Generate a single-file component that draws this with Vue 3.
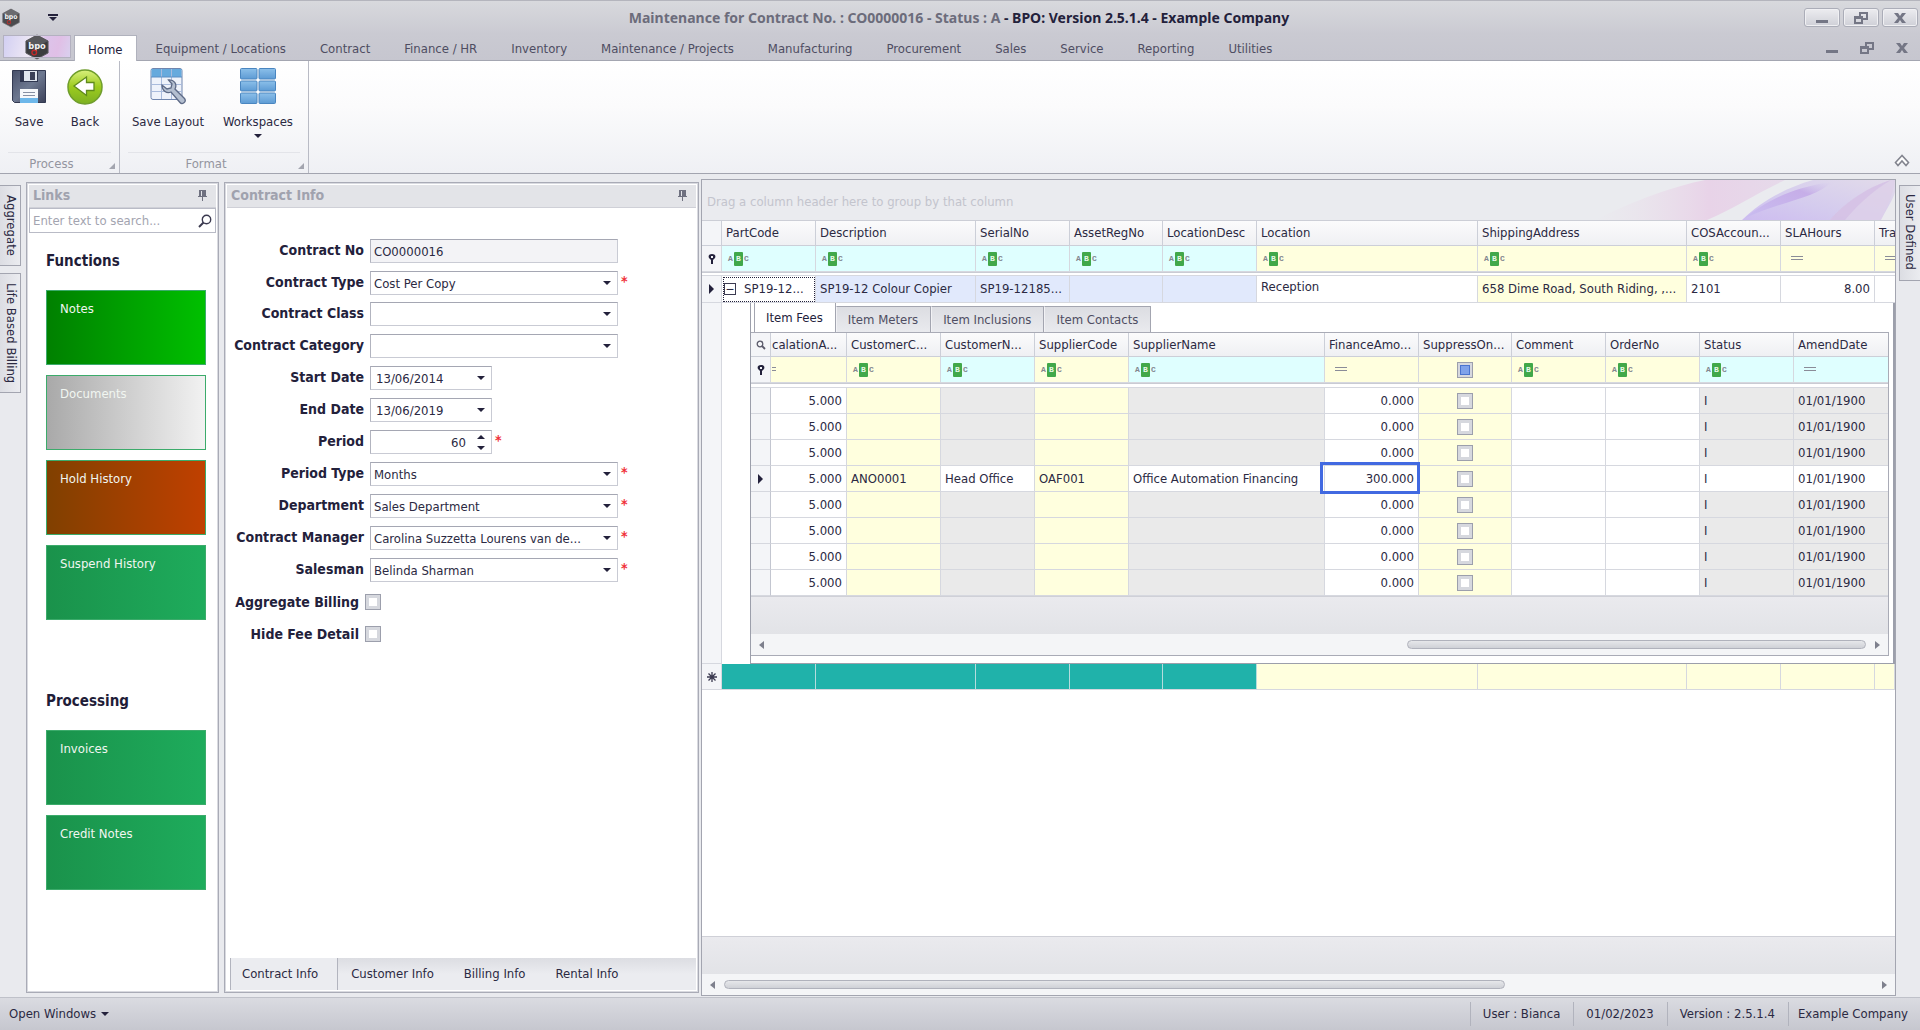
<script setup>
import { ref } from 'vue'

const menu = ['Home', 'Equipment / Locations', 'Contract', 'Finance / HR', 'Inventory', 'Maintenance / Projects', 'Manufacturing', 'Procurement', 'Sales', 'Service', 'Reporting', 'Utilities']
const activeMenu = ref('Home')

const tileGroups = [
  {
    title: 'Functions',
    tiles: [
      { label: 'Notes', tone: 'bright' },
      { label: 'Documents', tone: 'silver' },
      { label: 'Hold History', tone: 'rust' },
      { label: 'Suspend History', tone: 'green' },
    ],
  },
  {
    title: 'Processing',
    tiles: [
      { label: 'Invoices', tone: 'green' },
      { label: 'Credit Notes', tone: 'green' },
    ],
  },
]

const fields = [
  { id: 'no', label: 'Contract No', kind: 'readonly', value: 'CO0000016' },
  { id: 'type', label: 'Contract Type', kind: 'select', value: 'Cost Per Copy', required: true, tight: true },
  { id: 'class', label: 'Contract Class', kind: 'select', value: '' },
  { id: 'category', label: 'Contract Category', kind: 'select', value: '' },
  { id: 'start', label: 'Start Date', kind: 'date', value: '13/06/2014' },
  { id: 'end', label: 'End Date', kind: 'date', value: '13/06/2019' },
  { id: 'period', label: 'Period', kind: 'spin', value: '60', required: true },
  { id: 'ptype', label: 'Period Type', kind: 'select', value: 'Months', required: true },
  { id: 'dept', label: 'Department', kind: 'select', value: 'Sales Department', required: true },
  { id: 'manager', label: 'Contract Manager', kind: 'select', value: 'Carolina Suzzetta Lourens van de...', required: true },
  { id: 'sales', label: 'Salesman', kind: 'select', value: 'Belinda Sharman', required: true },
]
const checks = [
  { id: 'agg', label: 'Aggregate Billing' },
  { id: 'hide', label: 'Hide Fee Detail' },
]
const panelTabs = ['Contract Info', 'Customer Info', 'Billing Info', 'Rental Info']

const itemColumns = [
  { name: 'PartCode', width: 94, tone: 'cyan', filter: 'abc' },
  { name: 'Description', width: 160, tone: 'cyan', filter: 'abc' },
  { name: 'SerialNo', width: 94, tone: 'cyan', filter: 'abc' },
  { name: 'AssetRegNo', width: 93, tone: 'cyan', filter: 'abc' },
  { name: 'LocationDesc', width: 94, tone: 'cyan', filter: 'abc' },
  { name: 'Location', width: 221, tone: 'cream', filter: 'abc' },
  { name: 'ShippingAddress', width: 209, tone: 'cream', filter: 'abc' },
  { name: 'COSAccoun...', width: 94, tone: 'cream', filter: 'abc' },
  { name: 'SLAHours', width: 94, tone: 'cream', filter: 'eq' },
  { name: 'Tra', width: 0, tone: 'cream', filter: 'eq', edge: true },
]

const feeTabs = ['Item Fees', 'Item Meters', 'Item Inclusions', 'Item Contacts']
const feeColumns = [
  { key: 'esc', name: 'calationA...', width: 76, tone: 'cream', filter: 'eq', cell: 'white num', cut: true },
  { key: 'cust', name: 'CustomerC...', width: 94, tone: 'cream', filter: 'abc', cell: 'cream' },
  { key: 'custName', name: 'CustomerN...', width: 94, tone: 'cyan', filter: 'abc', cell: 'grey' },
  { key: 'supp', name: 'SupplierCode', width: 94, tone: 'cream', filter: 'abc', cell: 'cream' },
  { key: 'suppName', name: 'SupplierName', width: 196, tone: 'cyan', filter: 'abc', cell: 'grey' },
  { key: 'finance', name: 'FinanceAmo...', width: 94, tone: 'cream', filter: 'eq', cell: 'white num' },
  { key: 'suppress', name: 'SuppressOn...', width: 93, tone: 'cream', filter: 'check', cell: 'cream mid' },
  { key: 'comment', name: 'Comment', width: 94, tone: 'cream', filter: 'abc', cell: 'white' },
  { key: 'order', name: 'OrderNo', width: 94, tone: 'cream', filter: 'abc', cell: 'white' },
  { key: 'status', name: 'Status', width: 94, tone: 'cyan', filter: 'abc', cell: 'grey' },
  { key: 'amend', name: 'AmendDate', width: 0, tone: 'cyan', filter: 'eq', cell: 'grey' },
]
const feeRows = Array.from({ length: 8 }, (_, i) => ({
  esc: '5.000',
  finance: '0.000',
  status: 'I',
  amend: '01/01/1900',
  ...(i === 3
    ? { current: true, cust: 'ANO0001', custName: 'Head Office', supp: 'OAF001', suppName: 'Office Automation Financing', finance: '300.000' }
    : {}),
}))

const statusItems = ['User : Bianca', '01/02/2023', 'Version : 2.5.1.4', 'Example Company']
</script>

<template>
  <div class="app">
    <header class="titlebar">
      <svg class="logo-small" viewBox="0 0 26 28" aria-hidden="true">
        <path d="M13 1 25 7.500V20.500L13 27 1 20.500V7.500Z" fill="#4a4a4d" stroke="#77777b" />
        <path d="M13 1 25 7.500 13 14 1 7.500Z" fill="#6b6b6f" />
        <text x="13" y="16" text-anchor="middle" class="logo-text">bpo</text>
        <circle cx="10" cy="20" r="2.500" fill="none" stroke="#b3302f" stroke-width="1.500" />
      </svg>
      <button class="quick" aria-label="Customize quick access">
        <svg viewBox="0 0 10 8" width="10" height="8"><path d="M0 0H10V2H0ZM1 3H9L5 7Z" fill="#23213b" /></svg>
      </button>
      <h1><span>Maintenance for Contract No. : CO0000016 - Status : A</span> - BPO: Version 2.5.1.4 - Example Company</h1>
      <div class="win">
        <button aria-label="Minimize"><svg viewBox="0 0 14 12"><path d="M1 8H13V11H1Z" /></svg></button>
        <button aria-label="Restore"><svg viewBox="0 0 14 12"><path fill-rule="evenodd" d="M5 0H14V8H9V12H0V4H5ZM7 2V4H9V6H12V2ZM2 7V10H7V7Z" /></svg></button>
        <button aria-label="Close"><svg viewBox="0 0 14 12"><path d="M1 1H5L7 4 9 1H13L9 6 13 11H9L7 8 5 11H1L5 6Z" /></svg></button>
      </div>
    </header>

    <nav class="menubar">
      <button class="app-button" aria-label="Application menu">
        <svg class="logo" viewBox="0 0 26 28" aria-hidden="true">
          <path d="M13 1 25 7.500V20.500L13 27 1 20.500V7.500Z" fill="#3c3c3f" stroke="#5d5d61" />
          <path d="M13 1 25 7.500 13 14 1 7.500Z" fill="#58585c" />
          <text x="13" y="16" text-anchor="middle" class="logo-text">bpo</text>
          <circle cx="10" cy="20" r="2.500" fill="none" stroke="#c22a2a" stroke-width="1.500" />
        </svg>
      </button>
      <button v-for="m in menu" :key="m" class="menu-tab" :class="{ on: m === activeMenu }">{{ m }}</button>
      <div class="mdi">
        <button aria-label="Minimize document"><svg viewBox="0 0 14 12"><path d="M1 8H13V11H1Z" /></svg></button>
        <button aria-label="Restore document"><svg viewBox="0 0 14 12"><path fill-rule="evenodd" d="M5 0H14V8H9V12H0V4H5ZM7 2V4H9V6H12V2ZM2 7V10H7V7Z" /></svg></button>
        <button aria-label="Close document"><svg viewBox="0 0 14 12"><path d="M1 1H5L7 4 9 1H13L9 6 13 11H9L7 8 5 11H1L5 6Z" /></svg></button>
      </div>
    </nav>

    <section class="ribbon">
      <div class="group process">
        <div class="tools">
          <button class="tool">
            <svg viewBox="0 0 36 38" aria-hidden="true">
              <defs><linearGradient id="disk" x2="1" y2="1"><stop stop-color="#48506a" /><stop offset=".5" stop-color="#6d7890" /><stop offset="1" stop-color="#3c4159" /></linearGradient></defs>
              <path d="M1.500 3.500H34.500V35.500H3.500L1.500 33.500Z" fill="url(#disk)" stroke="#333a52" />
              <path d="M9 4H27V15H9Z" fill="#2f3650" /><path d="M13 4H26V14H13Z" fill="#dfe5ee" /><path d="M19 5H24V13H19Z" fill="#3a4058" />
              <path d="M9 22H27V36H9Z" fill="#f6f8fb" /><path d="M9 31H27V36H9Z" fill="#6db7ea" /><path d="M12 25.500H24M12 28.500H24" stroke="#8790a4" />
            </svg>
            <span>Save</span>
          </button>
          <button class="tool">
            <svg viewBox="0 0 36 38" aria-hidden="true">
              <defs><linearGradient id="orb" x2="0" y2="1"><stop stop-color="#d8f07c" /><stop offset=".5" stop-color="#9ccb1e" /><stop offset="1" stop-color="#7cb022" /></linearGradient></defs>
              <circle cx="18" cy="20" r="17" fill="url(#orb)" stroke="#6f9d2c" stroke-width="1.500" />
              <path d="M7 19 19.500 10V15.500H27V23.500H19.500V28.500Z" fill="#fff" stroke="#5f8a1c" stroke-width="1.300" />
            </svg>
            <span>Back</span>
          </button>
        </div>
        <div class="caption">Process</div>
      </div>
      <div class="group format">
        <div class="tools">
          <button class="tool">
            <svg viewBox="0 0 36 38" aria-hidden="true">
              <rect x="1" y="1.500" width="31" height="31" rx="2" fill="#eef2fa" stroke="#7086ae" />
              <path d="M1.500 2H31.500V10H1.500Z" fill="#66aadd" /><path d="M11.500 2V32M21.500 2V32M1 17.500H32M1 24.500H32" stroke="#a9bbdc" />
              <path d="M1 10H32" stroke="#5c8fc4" />
              <path d="M12 18C12 24 17 27 21 25L30 35.500C32 38 37 35 34.500 31.500L25 22C27.500 17 24 12.500 18.500 13L22 17 21 21 17 22Z" fill="#b4bfd0" stroke="#5d6a86" stroke-width="1.300" />
            </svg>
            <span>Save Layout</span>
          </button>
          <button class="tool">
            <svg viewBox="0 0 36 38" aria-hidden="true">
              <defs><linearGradient id="win" x2="0" y2="1"><stop stop-color="#8cc0ea" /><stop offset="1" stop-color="#5d9bd4" /></linearGradient></defs>
              <g fill="url(#win)" stroke="#4a86c0">
                <rect x=".5" y="1.500" width="16.500" height="10.500" rx="1" /><rect x="19" y="1.500" width="16.500" height="10.500" rx="1" />
                <rect x=".5" y="14" width="16.500" height="10" rx="1" /><rect x="19" y="14" width="16.500" height="10" rx="1" />
                <rect x=".5" y="26" width="16.500" height="10.500" rx="1" /><rect x="19" y="26" width="16.500" height="10.500" rx="1" />
              </g>
            </svg>
            <span>Workspaces</span>
            <i class="tri"></i>
          </button>
        </div>
        <div class="caption">Format</div>
      </div>
      <button class="collapse" aria-label="Collapse ribbon">
        <svg viewBox="0 0 16 13" width="16" height="13"><path d="M8 1.500 1.500 8.500 4 11.500 8 7 12 11.500 14.500 8.500Z" fill="#fff" stroke="#83858f" stroke-width="1.600" /></svg>
      </button>
    </section>

    <main class="work">
      <aside class="strip left">
        <button>Aggregate</button>
        <button>Life Based Billing</button>
      </aside>

      <section class="panel links">
        <header class="panel-head">
          <h2>Links</h2>
          <svg viewBox="0 0 9 11" width="9" height="11"><path d="M1 0H8V6H9V7H5V11H4V7H0V6H1ZM3 1V6H4V1Z" fill="#6f7180" fill-rule="evenodd" /></svg>
        </header>
        <div class="search">
          <input type="search" aria-label="Search links" placeholder="Enter text to search..." />
          <svg viewBox="0 0 14 14" width="14" height="14"><circle cx="8.500" cy="5.500" r="4.200" fill="none" stroke="#3b3a50" stroke-width="1.400" /><path d="M5.500 8.500 1 13" stroke="#3b3a50" stroke-width="2" /></svg>
        </div>
        <div v-for="g in tileGroups" :key="g.title" class="tile-group">
          <h3>{{ g.title }}</h3>
          <button v-for="t in g.tiles" :key="t.label" class="tile" :class="t.tone">{{ t.label }}</button>
        </div>
      </section>

      <section class="panel contract">
        <header class="panel-head">
          <h2>Contract Info</h2>
          <svg viewBox="0 0 9 11" width="9" height="11"><path d="M1 0H8V6H9V7H5V11H4V7H0V6H1ZM3 1V6H4V1Z" fill="#6f7180" fill-rule="evenodd" /></svg>
        </header>
        <form class="form" @submit.prevent>
          <div v-for="f in fields" :key="f.id" class="field" :class="{ tight: f.tight }">
            <label :for="f.id">{{ f.label }}</label>
            <span class="box" :class="f.kind">
              <select v-if="f.kind === 'select'" :id="f.id"><option>{{ f.value }}</option></select>
              <input v-else :id="f.id" type="text" :value="f.value" :readonly="f.kind === 'readonly'" />
            </span>
            <span v-if="f.required" class="req">*</span>
          </div>
          <div v-for="c in checks" :key="c.id" class="field check">
            <label :for="c.id">{{ c.label }}</label>
            <input :id="c.id" type="checkbox" class="cb" />
          </div>
        </form>
        <div class="panel-tabs">
          <button v-for="(t, i) in panelTabs" :key="t" :class="{ on: i === 0 }">{{ t }}</button>
        </div>
      </section>

      <section class="grid">
        <div class="group-bar">
          <span>Drag a column header here to group by that column</span>
          <svg class="art" viewBox="0 0 300 40" preserveAspectRatio="none" aria-hidden="true">
            <defs>
              <linearGradient id="pk" x1="0" x2="1"><stop stop-color="#eadfea" stop-opacity="0" /><stop offset=".6" stop-color="#e8d3e8" /><stop offset="1" stop-color="#e6daea" /></linearGradient>
              <linearGradient id="vi" x1="0" y1="1" x2="1" y2="0"><stop stop-color="#cdbcf0" /><stop offset=".4" stop-color="#d4cbee" /><stop offset="1" stop-color="#e2dbea" /></linearGradient>
              <linearGradient id="vs" x1="0" y1="1" x2="1" y2="0"><stop stop-color="#c9bcf0" /><stop offset=".7" stop-color="#c6aee8" /><stop offset="1" stop-color="#d2c8ec" stop-opacity="0" /></linearGradient>
            </defs>
            <path d="M0 40C40 20 80 6 110 0H190C160 14 140 28 112 40Z" fill="url(#pk)" />
            <path d="M147 40C165 22 190 8 218 0H300V40Z" fill="url(#vi)" />
            <path d="M150 38C170 22 195 8 236 2 222 18 190 20 150 38Z" fill="url(#vs)" />
            <path d="M235 40C250 22 275 6 296 0H300C298 14 292 28 286 40Z" fill="#ddcfe8" opacity=".8" />
            <path d="M235 40C250 22 275 6 296 0 276 12 262 26 250 40Z" fill="#d3bde4" opacity=".7" />
            <path d="M286 40C292 28 298 20 300 12V40Z" fill="#eaeaee" />
          </svg>
        </div>

        <table class="items">
          <colgroup>
            <col class="ind-col" />
            <col v-for="c in itemColumns" :key="c.name" :style="c.width ? { width: c.width + 'px' } : null" />
          </colgroup>
          <thead>
            <tr class="head">
              <th class="ind"></th>
              <th v-for="c in itemColumns" :key="c.name" :class="{ edge: c.edge }">{{ c.name }}</th>
            </tr>
            <tr class="filter">
              <td class="ind"><svg viewBox="0 0 8 10" width="8" height="10"><path d="M4 0C1 0 0 2 1 4L3 6V10H5V6L7 4C8 2 7 0 4 0ZM3 2H5V4H3Z" fill="#23213b" fill-rule="evenodd" /></svg></td>
              <td v-for="c in itemColumns" :key="c.name" :class="[c.tone, { edge: c.edge }]">
                <span v-if="c.filter === 'abc'" class="abc"><i>A</i><b>B</b><i>C</i></span>
                <svg v-else class="eq" viewBox="0 0 12 5" width="12" height="5"><path d="M0 0H12V1H0ZM0 3H12V4H0Z" fill="#8a8c98" /></svg>
              </td>
            </tr>
            <tr class="split"><td :colspan="itemColumns.length + 1"></td></tr>
          </thead>
          <tbody>
            <tr class="master">
              <td class="ind"><i class="ptr"></i></td>
              <td class="focus"><span class="row"><button class="expander" aria-label="Collapse row">−</button>SP19-12...</span></td>
              <td class="lilac">SP19-12 Colour Copier</td>
              <td class="lilac">SP19-12185...</td>
              <td class="lilac"></td>
              <td class="lilac"></td>
              <td class="white high">Reception</td>
              <td class="cream">658 Dime Road, South Riding, ,...</td>
              <td class="white">2101</td>
              <td class="white num">8.00</td>
              <td class="white edge"></td>
            </tr>
            <tr>
              <td class="ind"></td>
              <td class="detail-cell" :colspan="itemColumns.length">
                <div class="detail">
                  <div class="fee-tabs">
                    <button v-for="(t, i) in feeTabs" :key="t" :class="{ on: i === 0 }">{{ t }}</button>
                  </div>
                  <div class="fee-grid">
                    <table class="fees">
                      <colgroup>
                        <col class="ind-col" />
                        <col v-for="c in feeColumns" :key="c.key" :style="c.width ? { width: c.width + 'px' } : null" />
                      </colgroup>
                      <thead>
                        <tr class="head">
                          <th class="ind"><svg viewBox="0 0 10 10" width="10" height="10"><circle cx="4" cy="4" r="2.800" fill="none" stroke="#5a5a6a" stroke-width="1.300" /><path d="M6 6 9 9" stroke="#5a5a6a" stroke-width="1.800" /></svg></th>
                          <th v-for="c in feeColumns" :key="c.key" :class="{ cut: c.cut }">{{ c.name }}</th>
                        </tr>
                        <tr class="filter">
                          <td class="ind"><svg viewBox="0 0 8 10" width="8" height="10"><path d="M4 0C1 0 0 2 1 4L3 6V10H5V6L7 4C8 2 7 0 4 0ZM3 2H5V4H3Z" fill="#23213b" fill-rule="evenodd" /></svg></td>
                          <td v-for="c in feeColumns" :key="c.key" :class="[c.tone, { cut: c.cut, mid: c.filter === 'check' }]">
                            <span v-if="c.filter === 'abc'" class="abc"><i>A</i><b>B</b><i>C</i></span>
                            <input v-else-if="c.filter === 'check'" type="checkbox" class="cb blue" aria-label="Filter suppressed" />
                            <svg v-else class="eq" :viewBox="c.cut ? '8 0 4 5' : '0 0 12 5'" :width="c.cut ? 4 : 12" height="5"><path d="M0 0H12V1H0ZM0 3H12V4H0Z" fill="#8a8c98" /></svg>
                          </td>
                        </tr>
                        <tr class="split"><td :colspan="feeColumns.length + 1"></td></tr>
                      </thead>
                      <tbody>
                        <tr v-for="(r, i) in feeRows" :key="i" :class="{ current: r.current }">
                          <td class="ind"><i v-if="r.current" class="ptr"></i></td>
                          <td v-for="c in feeColumns" :key="c.key" :class="[c.cell, { editing: r.current && c.key === 'finance' }]">
                            <input v-if="c.key === 'suppress'" type="checkbox" class="cb" aria-label="Suppress" />
                            <template v-else>{{ r[c.key] }}</template>
                          </td>
                        </tr>
                      </tbody>
                    </table>
                    <div class="summary"></div>
                    <div class="scroll"><i class="arr l"></i><div class="track fee-track"><div class="thumb"></div></div><i class="arr r"></i></div>
                  </div>
                </div>
              </td>
            </tr>
            <tr class="new">
              <td class="ind"><svg viewBox="0 0 10 10" width="10" height="10"><path d="M5 0V10M0 5H10M1.500 1.500 8.500 8.500M8.500 1.500 1.500 8.500" stroke="#3b3a50" stroke-width="1.300" /></svg></td>
              <td v-for="c in itemColumns" :key="c.name" :class="c.tone === 'cyan' ? 'teal' : 'cream'"></td>
            </tr>
          </tbody>
        </table>
        <div class="blank"></div>
        <div class="summary"></div>
        <div class="scroll"><i class="arr l"></i><div class="track item-track"><div class="thumb"></div></div><i class="arr r"></i></div>
      </section>

      <aside class="strip right">
        <button>User Defined</button>
      </aside>
    </main>

    <footer class="status">
      <button class="open">Open Windows <i class="tri"></i></button>
      <span v-for="s in statusItems" :key="s" class="item">{{ s }}</span>
    </footer>
  </div>
</template>

<style>
body { margin: 0; }
</style>

<style scoped>
* { box-sizing: border-box; }
.app {
  display: flex;
  flex-direction: column;
  min-height: 100vh;
  font: 13px/16px "DejaVu Sans Condensed", "DejaVu Sans", sans-serif;
  color: #2b2942;
  background: #e9eaee;
}
button { font: inherit; color: inherit; background: none; border: 0; padding: 0; margin: 0; }
input, select { font: inherit; color: inherit; margin: 0; }
h1, h2, h3 { margin: 0; }
.tri { display: block; width: 0; height: 0; border: 4px solid transparent; border-top: 4px solid #23213b; border-bottom: 0; }

/* title bar */
.titlebar { display: flex; align-items: center; height: 34px; padding: 0 2px; border-top: 1px solid #b4b5bd; background: linear-gradient(#d8d9dd, #cacad2); }
.logo-small { width: 18px; height: 20px; }
.logo-text { font: bold 10px "DejaVu Sans Condensed", sans-serif; fill: #f2f2f4; }
.quick { display: flex; margin-left: 28px; }
h1 { flex: 1; padding-left: 56px; text-align: center; font: bold 14px/20px "Noto Sans", sans-serif; color: #23213b; white-space: nowrap; }
h1 span { color: #6c6c7b; }
.win { display: flex; gap: 3px; }
.win button { width: 36px; height: 19px; display: grid; place-items: center; border: 1px solid #abadb8; border-radius: 3px; background: linear-gradient(#ececf0, #cfd0d7); box-shadow: inset 0 0 0 1px #f0f0f3; }
.win svg, .mdi svg { width: 14px; height: 12px; fill: #747685; display: block; }

/* menu */
.menubar { display: flex; height: 27px; padding-top: 1px; background: linear-gradient(#cacad2, #c6c6cf); border-bottom: 1px solid #a4a6b1; }
.app-button { width: 68px; height: 23px; margin: 0 3px; border: 1px solid #f1eff6; outline: 1px solid #b3b1c0; outline-offset: -1px; background: linear-gradient(105deg, #d2cff2, #eee8f5 40%, #dcc4ea 60%, #e0bfe6 80%, #d9d0ee); display: grid; place-items: center; overflow: visible; }
.logo { width: 24px; height: 26px; margin: -2px 0; }
.menu-tab { padding: 2px 16px 0; margin-right: 2px; color: #4e4d62; white-space: nowrap; }
.menu-tab.on { padding: 2px 13px 0; margin: 0 3px -1px 0; background: #fff; color: #23213b; border: 1px solid #b0b2bd; border-bottom: 0; }
.mdi { margin-left: auto; display: flex; gap: 21px; padding-right: 11px; align-items: center; }

/* ribbon */
.ribbon { display: flex; height: 113px; background: linear-gradient(#fff, #fbfbfc 40%, #eff0f4); border-bottom: 1px solid #a2a4af; }
.group { display: flex; flex-direction: column; position: relative; border-right: 1px solid #b9bbc5; }
.group::after { content: ""; position: absolute; right: 4px; bottom: 4px; border: 3px solid #a3a5af; border-top-color: transparent; border-left-color: transparent; }
.process { width: 120px; }
.format { width: 189px; }
.tools { display: flex; flex: 1; padding-top: 6px; }
.process .tools { padding-left: 1px; }
.format .tools { padding-left: 3px; }
.tool { display: flex; flex-direction: column; align-items: center; gap: 9px; min-width: 56px; align-self: flex-start; }
.format .tool { min-width: 90px; }
.tool svg { width: 36px; height: 38px; }
.tool span { line-height: 16px; white-space: nowrap; }
.tool .tri { margin-top: -5px; }
.caption { height: 21px; margin: 0 8px; padding-right: 16px; text-align: center; line-height: 22px; color: #94959f; border-top: 1px solid #e3e4e9; }
.collapse { margin: auto 10px 6px auto; height: 13px; }

/* work area */
.work { flex: 1; display: flex; padding: 5px 0 1px; }
.strip { display: flex; flex-direction: column; align-items: flex-start; gap: 7px; padding-top: 6px; }
.strip button { writing-mode: vertical-rl; border: 1px solid #a3a5b0; background: linear-gradient(90deg, #dcdde3, #ebecf0); line-height: 16px; white-space: nowrap; }
.left { width: 26px; }
.left button { border-left: 0; padding: 9px 1px 9px 3px; }
.right { width: 24px; padding-left: 3px; }
.right button { border-right: 0; padding: 8px 2px 10px; width: 21px; }
.panel { display: flex; flex-direction: column; margin: 3px 0; background: #fff; border: 1px solid #a9abb6; box-shadow: inset 0 0 0 1px #d9dae0; }
.links { width: 193px; margin-right: 5px; padding: 2px; }
.contract { width: 475px; margin-right: 2px; padding: 2px; }
.panel-head { display: flex; justify-content: space-between; align-items: center; height: 23px; padding: 0 9px 2px 4px; background: #e3e4e8; border-bottom: 1px solid #cfd0d7; }
h2 { font: bold 14px/18px "DejaVu Sans Condensed", sans-serif; color: #a0a2ae; }
.search { display: flex; align-items: center; height: 25px; border: 1px solid #b9bbc6; padding: 0 3px; }
.search input { flex: 1; min-width: 0; border: 0; outline: 0; padding: 0; background: none; }
.search input::placeholder { color: #a3a4b0; opacity: 1; }
.tile-group { display: flex; flex-direction: column; gap: 10px; padding: 18px 10px 0 17px; }
.tile-group + .tile-group { padding-top: 71px; }
h3 { font: bold 15px/20px "DejaVu Sans Condensed", sans-serif; color: #1f1d38; margin-bottom: 9px; }
.tile { height: 75px; padding: 10px 13px; display: flex; justify-content: flex-start; align-items: flex-start; color: #f1f6f1; border: 1px solid #3cab6b; text-align: left; }
.bright { background: linear-gradient(90deg, #008000, #00c000); }
.silver { background: linear-gradient(90deg, #a9a9a9, #f2f2f2); }
.rust { background: linear-gradient(90deg, #804000, #c04000); }
.green { background: linear-gradient(90deg, #1a924b, #1eac5c); }

/* contract form */
.form { flex: 1; padding-top: 31px; }
.field { display: flex; height: 24px; margin-bottom: 8px; }
.tight { margin-bottom: 7px; }
.field label { width: 137px; margin-right: 6px; text-align: right; font: bold 14px/22px "DejaVu Sans Condensed", sans-serif; color: #23213b; white-space: nowrap; }
.box { position: relative; width: 248px; background: #fff; border: 1px solid #c9cbd4; border-top-color: #a5a7b3; border-left-color: #b2b4bf; }
.date, .spin { width: 122px; }
.box select, .box input { display: block; width: 100%; height: 22px; padding: 1px 3px 0; border: 0; outline: 0; background: none; appearance: none; border-radius: 0; }
.box.readonly { background: #f3f3f6; }
.box.date input { padding-left: 5px; }
.box.spin input { text-align: right; padding-right: 25px; }
.box.select::after, .box.date::after, .box.spin::after { content: ""; position: absolute; right: 6px; top: 9px; border: 4px solid transparent; border-top-color: #23213b; border-bottom: 0; pointer-events: none; }
.box.spin::after { top: 15px; }
.box.spin::before { content: ""; position: absolute; right: 6px; top: 4px; border: 4px solid transparent; border-bottom-color: #23213b; border-top: 0; }
.req { margin-left: 3px; color: #f03038; font: bold 14px/20px "DejaVu Sans Condensed", sans-serif; }
.check { align-items: center; }
.check label { width: 132px; margin-right: 6px; }
.cb { appearance: none; display: block; flex: none; width: 16px; height: 16px; border: 1px solid #9c9fac; background: #fff; box-shadow: inset 0 0 0 3px #d6d8de; }
.cb.blue { background: #7fa2ea; box-shadow: inset 0 0 0 2px #d6d8de, inset 0 0 0 3px #4a74cf; }
.panel-tabs { display: flex; height: 32px; margin-left: 3px; background: linear-gradient(#dcdde2, #ebecf0 50%, #ebecf0); }
.panel-tabs button { padding: 0 17px 0 13px; white-space: nowrap; }
.panel-tabs .on { background: #ebecf0; border: 1px solid #b2b4be; border-width: 0 1px; padding: 0 19px 0 11px; }

/* grid */
.grid { flex: 1; min-width: 0; display: flex; flex-direction: column; border: 1px solid #a3a5b0; background: #fff; }
.group-bar { position: relative; display: flex; align-items: center; height: 41px; padding: 3px 0 0 5px; color: #c3c4cd; background: #eaebef; border-bottom: 1px solid #ccced6; }
.art { position: absolute; right: 0; top: 0; width: 300px; height: 40px; }
table { width: 100%; table-layout: fixed; border-collapse: separate; border-spacing: 0; }
.ind-col { width: 20px; }
th, td { height: 26px; padding: 0 4px; border-right: 1px solid #d6d8df; border-bottom: 1px solid #d6d8df; font-weight: normal; text-align: left; white-space: nowrap; overflow: hidden; }
.head th { height: 25px; background: linear-gradient(#fbfbfc, #eff0f3); border-color: #cccfd8; }
.ind, .head .ind { padding: 0; text-align: center; background: #f4f5f8; }
.ind svg { display: block; margin: 0 auto; }
.split td { height: 5px; padding: 0; border-right: 0; border-top: 1px solid #c9cbd3; background: #fff; }
.items > thead > .split td { height: 4px; }
.edge { border-right: 0; padding-right: 0; }
.cyan { background: #dfffff; }
.cream { background: #ffffde; }
.lilac { background: #e1e9fc; }
.grey { background: #eaeaea; }
.current .grey, .white { background: #fff; }
.teal { background: #20b2aa; }
.num { text-align: right; }
.mid .cb { margin: 0 auto; }
.cut { padding-left: 1px; }
.abc { display: flex; align-items: center; height: 14px; padding-left: 2px; }
.abc i { font: bold 8px/14px "Liberation Mono", monospace; color: #83868f; width: 6px; }
.abc b { width: 9px; height: 14px; background: #41a84a; border-radius: 1px; color: #e8f8e8; text-align: center; font: bold 8px/14px "Liberation Mono", monospace; }
.abc b + i { padding-left: 1px; }
.eq { display: block; margin-left: 6px; }
.cut .eq { margin-left: 0; }
.ptr { display: block; width: 0; height: 0; margin: 0 auto; border: 5px solid transparent; border-left-color: #23213b; border-right: 0; }
.master td { height: 27px; }
.master .high { padding-bottom: 4px; }
.master .focus { padding: 0 2px; background: #fff; outline: 1px dotted #23213b; outline-offset: -2px; }
.row { display: flex; align-items: center; gap: 8px; }
.expander { width: 12px; height: 12px; border: 1px solid #3b3a50; line-height: 9px; font-size: 12px; text-align: center; }
.detail-cell { padding: 0 0 0 28px; border: 0; vertical-align: top; }
.detail { height: 361px; border: 1px solid #9c9fab; border-top: 0; border-right-width: 2px; padding-right: 4px; }
.fee-tabs { display: flex; align-items: flex-end; height: 29px; padding-left: 3px; }
.fee-tabs button { height: 26px; padding: 0 12px 0 11px; background: linear-gradient(#dcdde2, #e9eaee); border: 1px solid #a3a5b0; border-bottom: 0; color: #4e4d62; white-space: nowrap; }
.fee-tabs button + button { border-left: 1px solid #f2f2f5; }
.fee-tabs .on { height: 29px; background: #fff; color: #23213b; border-top: 0; }
.fee-grid { border: 1px solid #a9abb6; border-left: 0; }
.fees .head th { height: 24px; }
.fees td:last-child, .fees th:last-child { border-right: 0; }
.fees tbody .ind { border-right-color: #c3c6d0; }
.editing { position: relative; overflow: visible; }
.editing::after { content: ""; position: absolute; inset: -4px -2px -3px -5px; border: 3px solid #4169e1; }
.new td { border-top: 0; }
.new .teal { border-right-color: #b5dcdd; }
.blank { flex: 1; }
.summary { height: 38px; background: linear-gradient(#eaeaee, #e2e3e7); border-top: 1px solid #cfd0d7; }
.scroll { display: flex; align-items: center; height: 21px; padding: 0 8px; background: #f4f5f7; }
.arr { width: 0; height: 0; border: 4px solid transparent; }
.arr.l { border-right: 5px solid #7e808d; border-left: 0; }
.arr.r { border-left: 5px solid #7e808d; border-right: 0; }
.track { flex: 1; display: flex; margin: 0 9px; }
.thumb { height: 9px; border: 1px solid #b0b2bc; border-radius: 5px; background: linear-gradient(#e6e7ea, #cfd1d7); }
.item-track .thumb { width: 68%; }
.fee-track .thumb { width: 42%; margin-left: auto; }

/* status bar */
.status { display: flex; align-items: center; height: 33px; padding: 0 12px 0 9px; background: linear-gradient(#dadbe1, #c6c7cf); border-top: 1px solid #bfc1c9; }
.open { display: flex; align-items: center; gap: 5px; margin-right: auto; }
.item { padding: 4px 13px 4px 12px; border-left: 1px solid #b1b3bd; white-space: nowrap; }
.item:last-child { padding: 4px 0 4px 9px; }
</style>
